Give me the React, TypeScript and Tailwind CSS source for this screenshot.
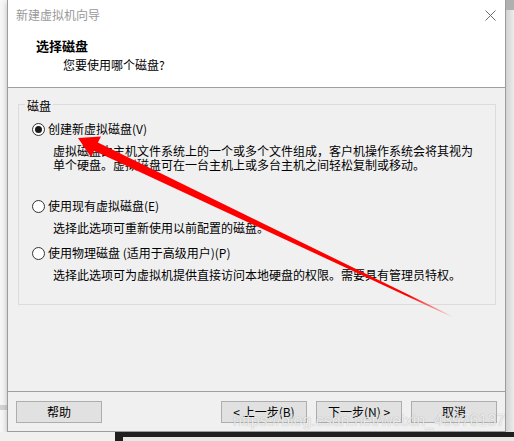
import React from 'react';

const FONT = "font-['Noto_Sans_CJK_SC','Noto_Sans',sans-serif]";

type Option = {
  label: string;
  desc: string[];
  checked?: boolean;
  gap: string;
};

const OPTIONS: Option[] = [
  {
    label: '创建新虚拟磁盘(V)',
    desc: [
      '虚拟磁盘由主机文件系统上的一个或多个文件组成，客户机操作系统会将其视为',
      '单个硬盘。虚拟磁盘可在一台主机上或多台主机之间轻松复制或移动。',
    ],
    checked: true,
    gap: 'mb-[26px]',
  },
  {
    label: '使用现有虚拟磁盘(E)',
    desc: ['选择此选项可重新使用以前配置的磁盘。'],
    gap: 'mb-[10px]',
  },
  {
    label: '使用物理磁盘 (适用于高级用户)(P)',
    desc: ['选择此选项可为虚拟机提供直接访问本地硬盘的权限。需要具有管理员特权。'],
    gap: '',
  },
];

const Radio: React.FC<{ checked?: boolean }> = ({ checked }) => (
  <span className="w-[13px] h-[13px] rounded-full border border-[#333333] bg-white flex items-center justify-center shrink-0">
    {checked && <span className="w-[7px] h-[7px] rounded-full bg-[#1a1a1a]" />}
  </span>
);

const Btn: React.FC<{ children: React.ReactNode }> = ({ children }) => (
  <div className="w-[86px] h-[22px] border border-[#adadad] bg-[#e1e1e1] flex items-center justify-center text-[12px] leading-[16px] text-black">
    {children}
  </div>
);

const App: React.FC = () => {
  return (
    <div className={`relative w-[514px] h-[441px] overflow-hidden flex flex-col bg-[#f4f4f4] ${FONT}`}>
      <div className="flex h-[432px]">
        {/* desktop on the left */}
        <div className="w-[7px] flex flex-col bg-[#f7f7f7]">
          <div className="h-[405px]" />
          <div className="h-[5px] bg-[#d4d4d4]" />
        </div>

        {/* wizard dialog */}
        <div className="w-[499px] h-[432px] flex flex-col border-l border-r border-b border-[#9c9c9c] bg-[#f0f0f0] shadow-[0_2px_6px_rgba(0,0,0,0.25)]">
          <div className="bg-white">
            <div className="h-[30px] flex items-center justify-between pl-[8px] pr-[9px]">
              <span className="text-[12px] leading-[16px] text-[#999999]">新建虚拟机向导</span>
              <svg width="11" height="11" viewBox="0 0 11 11">
                <path d="M0.5 0.5 L10.5 10.5 M10.5 0.5 L0.5 10.5" stroke="#6b6b6b" strokeWidth="1" fill="none" />
              </svg>
            </div>
            <div className="h-[58px] border-b border-[#a0a0a0] pt-[8px] pl-[28px]">
              <div className="text-[13px] leading-[16px] font-bold text-black">选择磁盘</div>
              <div className="mt-[3px] pl-[27px] text-[12px] leading-[16px] text-black">您要使用哪个磁盘?</div>
            </div>
          </div>

          <div className="flex-1 pt-[16px] pl-[10px]">
            <div className="relative w-[478px] h-[201px] border border-[#dcdcdc] pt-[16px] pl-[13px]">
              <span className="absolute left-[6px] top-[-7px] px-[2px] bg-[#f0f0f0] text-[12px] leading-[16px] text-black">
                磁盘
              </span>
              {OPTIONS.map((o) => (
                <div key={o.label} className={o.gap}>
                  <div className="flex items-center gap-[3px] h-[16px]">
                    <Radio checked={o.checked} />
                    <span className="text-[12px] leading-[16px] text-black whitespace-nowrap">{o.label}</span>
                  </div>
                  <div className="mt-[7px] pl-[21px]">
                    {o.desc.map((d) => (
                      <div key={d} className="text-[12px] leading-[14px] text-black whitespace-nowrap">
                        {d}
                      </div>
                    ))}
                  </div>
                </div>
              ))}
            </div>
          </div>

          <div className="h-[40px] border-t border-[#a0a0a0] pt-[9px] px-[8px] flex">
            <Btn>帮助</Btn>
            <div className="flex-1" />
            <div className="flex gap-[9px]">
              <Btn>&lt; 上一步(B)</Btn>
              <Btn>下一步(N) &gt;</Btn>
              <Btn>取消</Btn>
            </div>
          </div>
        </div>

        {/* desktop on the right */}
        <div className="flex-1 flex flex-col">
          <div className="h-[10px] bg-[#b0b0b0]" />
          <div className="flex-1 bg-gradient-to-r from-[#d2d2d2] to-[#ececec]" />
        </div>
      </div>

      {/* strip below the dialog */}
      <div className="flex-1 flex">
        <div className="w-[115px] bg-[#f0f0f0]" />
        <div className="flex-1 flex bg-[#1f1f1f]">
          <div className="w-[8px]" />
          <div className="flex-1 flex flex-col">
            <div className="h-[5px]" />
            <div className="flex-1 bg-[#e8e8e8]" />
          </div>
        </div>
      </div>

      {/* red annotation arrow */}
      <svg className="absolute inset-0 pointer-events-none" width="514" height="441" viewBox="0 0 514 441">
        <defs>
          <linearGradient id="fade" gradientUnits="userSpaceOnUse" x1="78" y1="138" x2="453" y2="317">
            <stop offset="0" stopColor="#ff0000" />
            <stop offset="0.88" stopColor="#ff0000" />
            <stop offset="1" stopColor="#ff0000" stopOpacity="0" />
          </linearGradient>
        </defs>
        <polygon
          points="78,138 101,136.5 97.9,142.5 453.2,316.6 452.8,317.4 94.1,150.7 91,157"
          fill="url(#fade)"
        />
      </svg>

      {/* watermark */}
      <span className="absolute left-[233px] top-[412px] font-['Liberation_Sans',Arial,sans-serif] text-[16px] leading-[18px] text-white/80 whitespace-nowrap [text-shadow:0_0_1px_rgba(0,0,0,0.35)] pointer-events-none">
        https://blog.csdn.net/weixin_43976137
      </span>
    </div>
  );
};

export default App;
